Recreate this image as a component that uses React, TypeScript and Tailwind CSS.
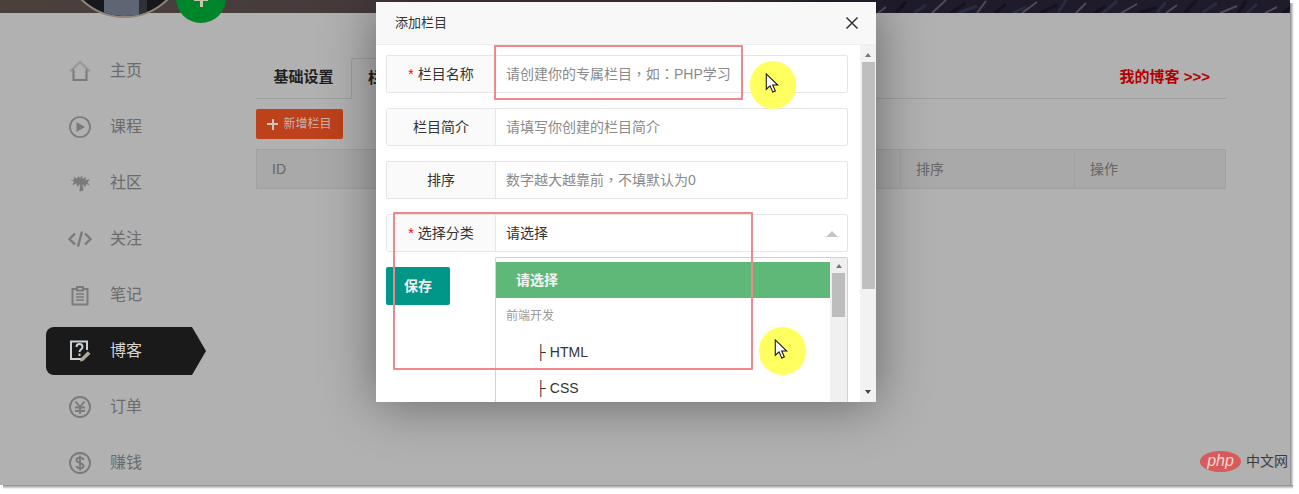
import type { ReactNode } from "react"

const font = "font-['Liberation_Sans','Noto_Sans_CJK_SC',sans-serif]"

const navIcon = "h-[24px] w-[24px] text-[#7a7a7a]"

const icons: Record<string, ReactNode> = {
  home: (
    <svg viewBox="0 0 24 24" className={navIcon} fill="none" stroke="currentColor" strokeWidth="2">
      <path d="M2 12.500 12 3l10 9.500" stroke="#989898" />
      <path d="M5.500 10.500V21h13V10.500" />
    </svg>
  ),
  play: (
    <svg viewBox="0 0 24 24" className={navIcon} fill="none" stroke="currentColor" strokeWidth="1.700">
      <circle cx="12" cy="12" r="10" />
      <path d="M8.500 7l8.500 5-8.500 5z" fill="currentColor" stroke="none" />
    </svg>
  ),
  palm: (
    <svg viewBox="0 0 24 24" className={navIcon} fill="currentColor">
      <path d="M10.500 5 12 7.500 13.500 4.500 15 8l3-2.500-.5 3.500 4.500-.5-2.500 3 2.500 3-4-1.500-.5 3.500-3-3.500 1 6.500-4 1 .5-7.500-3 3-.5-4-4 2.500 1.500-4.500L2 9l4.500-.5-1-3L9 7.500z" />
    </svg>
  ),
  code: (
    <svg viewBox="0 0 24 24" className={navIcon} fill="none" stroke="currentColor" strokeWidth="2.400">
      <path d="M7 6.500 1.500 12 7 17.500M17 6.500l5.500 5.500-5.500 5.500M14 4.500 10 19.500" />
    </svg>
  ),
  note: (
    <svg viewBox="0 0 24 24" className={navIcon} fill="none" stroke="currentColor" strokeWidth="1.900">
      <path d="M8.500 6H4.500v15.500h15V6h-4" />
      <path d="M9 4h6v3.500H9z" />
      <path d="M8 11h8M8 14h8M8 17h8" strokeWidth="1.500" />
    </svg>
  ),
  blog: (
    <svg viewBox="0 0 24 24" className="h-[24px] w-[24px] text-[#c9d0d6]" fill="none" stroke="currentColor" strokeWidth="2">
      <path d="M13 20H3V2.500h16V11" />
      <path d="M8.500 8c0-4 6-4 6 0 0 2.500-3 2.500-3 5M11.500 14.500v2.500" strokeWidth="2" />
      <path d="M15 22l-3 .5.8-3.300 7-7 2.700 2.500z" fill="#b0a89c" stroke="none" />
    </svg>
  ),
  yen: (
    <svg viewBox="0 0 24 24" className={navIcon} fill="none" stroke="currentColor" strokeWidth="1.900">
      <circle cx="12" cy="12" r="10" />
      <path d="M7.500 6.500 12 12l4.500-5.500M7 12.500h10M7 16h10M12 12v7" />
    </svg>
  ),
  dollar: (
    <svg viewBox="0 0 24 24" className={navIcon} fill="none" stroke="currentColor" strokeWidth="1.900">
      <circle cx="12" cy="12" r="10" />
      <path d="M15.500 9c-.5-3-7-3-7 0 0 3.500 7 2.500 7 6 0 3-6.500 3-7 0M12 4.500v15" />
    </svg>
  ),
}

const navItems = [
  { label: "主页", icon: "home" },
  { label: "课程", icon: "play" },
  { label: "社区", icon: "palm" },
  { label: "关注", icon: "code" },
  { label: "笔记", icon: "note" },
  { label: "博客", icon: "blog", active: true },
  { label: "订单", icon: "yen" },
  { label: "赚钱", icon: "dollar" },
]

const formRows = [
  { label: "栏目名称", placeholder: "请创建你的专属栏目，如：PHP学习", required: true },
  { label: "栏目简介", placeholder: "请填写你创建的栏目简介" },
  { label: "排序", placeholder: "数字越大越靠前，不填默认为0" },
]

// rock streaks of the banner photo, right of the modal
const streaks = Array.from({ length: 26 }, (_, i) => {
  const x = 878 + i * 16 + ((i * 11) % 9)
  const len = 8 + ((i * 13) % 11)
  const light = i % 3 === 0
  return {
    d: `M${x} 13l${len} -${6 + ((i * 5) % 8)}`,
    stroke: light ? "#6e6c70" : i % 3 === 1 ? "#0f0d16" : "#2f3950",
    width: light ? 2 : 3,
  }
})

function Cursor() {
  return (
    <svg viewBox="0 0 14 22" className="h-[21px] w-[14px]">
      <path d="M1 1v16l4-3.500 2.800 6.500 2.700-1.200-2.800-6.200H13z" fill="#fff" stroke="#111" strokeWidth="1.100" />
    </svg>
  )
}

function ScrollArrow({ up }: { up?: boolean }) {
  return (
    <div
      className={
        up
          ? "h-0 w-0 border-x-[3.5px] border-b-[4px] border-x-transparent border-b-[#777]"
          : "h-0 w-0 border-x-[3.5px] border-t-[4px] border-x-transparent border-t-[#444]"
      }
    />
  )
}

export default function App() {
  return (
    <div className={`relative h-[494px] w-[1299px] overflow-hidden bg-white ${font}`}>
      <div className="relative h-[485px] w-[1290px] overflow-hidden bg-[#b1b1b1]">
        {/* banner */}
        <div className="relative h-[13px] bg-gradient-to-r from-[#4a413d] via-[#42343a] via-55% to-[#1f1b2b] to-70%">
          <svg className="absolute left-0 top-0 h-[13px] w-[1290px]" viewBox="0 0 1290 13">
            {streaks.map((s) => (
              <path key={s.d} d={s.d} stroke={s.stroke} strokeWidth={s.width} fill="none" opacity="0.6" />
            ))}
          </svg>
        </div>
        {/* avatar + add button hanging over the banner */}
        <div className="absolute left-[62px] top-[-107px] h-[125px] w-[125px] overflow-hidden rounded-full border-2 border-[#8f8579] bg-[#17181b]">
          <div className="absolute bottom-0 left-[40px] h-[30px] w-[35px] bg-[#5d6672]" />
          <div className="absolute bottom-0 left-[75px] h-[30px] w-[8px] bg-[#2e3138]" />
        </div>
        <div className="absolute left-[176px] top-[-27px] flex h-[50px] w-[50px] items-end justify-center rounded-full bg-[#00862a] pb-[16px]">
          <span className="relative block h-[14px] w-[14px]">
            <span className="absolute left-[5.500px] top-0 h-[14px] w-[3px] bg-[#c4c8a8]" />
            <span className="absolute left-0 top-[6px] h-[2px] w-[14px] bg-[#c4c8a8]" />
          </span>
        </div>

        <div className="flex">
          <nav className="ml-[46px] mt-[30px] w-[210px] shrink-0">
            {navItems.map((item) =>
              item.active ? (
                <div key={item.label} className="flex h-[56px] items-center">
                  <div className="flex h-[48px] items-center">
                    <div className="flex h-[48px] w-[146px] items-center rounded-l-[8px] bg-[#1a1a1a] pl-[22px]">
                      {icons[item.icon]}
                      <span className="ml-[18px] text-[16px] text-[#d4d4d4]">{item.label}</span>
                    </div>
                    <div className="h-0 w-0 border-y-[24px] border-l-[14px] border-y-transparent border-l-[#1a1a1a]" />
                  </div>
                </div>
              ) : (
                <div key={item.label} className="flex h-[56px] items-center pl-[22px]">
                  {icons[item.icon]}
                  <span className="ml-[18px] text-[16px] text-[#6b6b6b]">{item.label}</span>
                </div>
              ),
            )}
          </nav>

          <main className="mt-[45px] w-[970px] shrink-0">
            <div className="flex h-[41px] items-end justify-between border-b border-[#9f9f9f]">
              <div className="flex h-full items-stretch">
                <div className="flex w-[95px] items-center justify-center pb-[2px] text-[15px] font-bold text-[#222]">基础设置</div>
                <div className="mb-[-1px] flex w-[120px] items-center rounded-t-[3px] border-x border-t border-[#9f9f9f] bg-[#b1b1b1] pb-[2px] pl-[16px] text-[15px] font-bold text-[#222]">
                  栏目管理
                </div>
              </div>
              <a className="mb-[10px] mr-[16px] text-[15px] font-bold text-[#b30000]">我的博客 &gt;&gt;&gt;</a>
            </div>
            <button className="mt-[10px] flex h-[30px] w-[87px] items-center justify-center gap-[5px] rounded-[2px] bg-[#bd411b] text-[12px] text-[#c9b3ab]">
              <span className="relative block h-[11px] w-[11px]">
                <span className="absolute left-[4.500px] top-0 h-[11px] w-[2px] bg-[#d0c4be]" />
                <span className="absolute left-0 top-[4.500px] h-[2px] w-[11px] bg-[#d0c4be]" />
              </span>
              新增栏目
            </button>
            <div className="mt-[10px] flex h-[40px] border border-[#a0a0a0] bg-[#a9a9a9] text-[14px] text-[#666]">
              <div className="flex w-[643px] items-center pl-[15px]">ID</div>
              <div className="flex w-[174px] items-center border-l border-[#a0a0a0] pl-[15px]">排序</div>
              <div className="flex flex-1 items-center border-l border-[#a0a0a0] pl-[15px]">操作</div>
            </div>
          </main>
        </div>

        {/* php logo */}
        <div className="absolute left-[1200px] top-[451px] flex items-center gap-[5px]">
          <div className="flex h-[21px] w-[41px] items-center justify-center rounded-[50%] bg-[#d95a5a] pb-[2px] text-[16px] italic text-[#f0d6d6]">php</div>
          <span className="text-[14px] text-[#3f3a3a]">中文网</span>
        </div>

        {/* modal */}
        <div className="absolute left-[376px] top-[2px] flex h-[400px] w-[500px] flex-col bg-white shadow-[0_2px_50px_rgba(0,0,0,0.42)]">
          <div className="flex h-[43px] shrink-0 items-center justify-between border-b border-[#eee] bg-[#f8f8f8] pl-[19px] pr-[17px]">
            <span className="text-[13px] text-[#333]">添加栏目</span>
            <svg viewBox="0 0 14 14" className="h-[14px] w-[14px]" fill="none" stroke="#333" strokeWidth="1.500">
              <path d="M1.500 1.500l11 11M12.500 1.500l-11 11" />
            </svg>
          </div>
          <div className="relative flex min-h-0 flex-1">
            <div className="flex w-[484px] flex-col gap-[15px] overflow-hidden pl-[10px] pt-[10px]">
              {formRows.map((row) => (
                <div key={row.label} className="flex h-[38px] w-[462px] shrink-0 rounded-[2px] border border-[#e6e6e6]">
                  <div className="flex w-[109px] shrink-0 items-center justify-center gap-[4px] border-r border-[#e6e6e6] bg-[#fafafa] text-[14px] text-[#333]">
                    {row.required && <span className="text-[#f00]">*</span>}
                    <span>{row.label}</span>
                  </div>
                  <div className="flex flex-1 items-center pl-[10px] font-['Liberation_Sans','Noto_Sans_CJK_TC',sans-serif] text-[14px] text-[#8a8a8a]">
                    {row.placeholder}
                  </div>
                </div>
              ))}
              <div className="flex h-[38px] w-[462px] shrink-0 rounded-[2px] border border-[#e6e6e6]">
                <div className="flex w-[109px] shrink-0 items-center justify-center gap-[4px] border-r border-[#e6e6e6] bg-[#fafafa] text-[14px] text-[#333]">
                  <span className="text-[#f00]">*</span>
                  <span>选择分类</span>
                </div>
                <div className="flex flex-1 items-center justify-between pl-[10px] pr-[9px] pt-[1px] text-[14px] text-[#333]">
                  请选择
                  <div className="h-0 w-0 border-x-[6px] border-b-[6px] border-x-transparent border-b-[#c4c4c4]" />
                </div>
              </div>
              <button className="h-[38px] w-[64px] shrink-0 rounded-[2px] bg-[#009688] text-[14px] font-bold text-[#f0f0f0]">保存</button>
            </div>
            {/* dropdown list */}
            <div className="absolute left-[119px] top-[212px] flex h-[145px] w-[353px] rounded-t-[2px] border-x border-t border-[#d2d2d2] bg-white">
              <div className="min-w-0 flex-1 pt-[4px]">
                <div className="flex h-[36px] items-center bg-[#5fb878] pl-[20px] text-[14px] font-bold text-[#f4f4f4]">请选择</div>
                <div className="flex h-[36px] items-center pl-[10px] text-[12px] text-[#999]">前端开发</div>
                <div className="flex h-[36px] items-center pl-[40px] text-[14px] text-[#333]">├ HTML</div>
                <div className="flex h-[36px] items-center pl-[40px] text-[14px] text-[#333]">├ CSS</div>
              </div>
              <div className="flex w-[17px] shrink-0 flex-col items-center bg-[#f0f0f0] pt-[6px]">
                <ScrollArrow up />
                <div className="mt-[5px] h-[44px] w-[13px] bg-[#bdbdbd]" />
              </div>
            </div>
            {/* modal scrollbar */}
            <div className="flex w-[16px] shrink-0 flex-col items-center bg-[#f2f2f2] pb-[8px] pt-[8px]">
              <ScrollArrow up />
              <div className="mt-[5px] h-[227px] w-[13px] bg-[#bfbfbf]" />
              <div className="mt-auto">
                <ScrollArrow />
              </div>
            </div>
          </div>
        </div>

        {/* annotations on top of the screenshot */}
        <div className="absolute left-[494px] top-[45px] h-[55px] w-[249px] rounded-[1px] border-2 border-[#f4858c]" />
        <div className="absolute left-[393px] top-[212px] h-[158px] w-[360px] rounded-[1px] border-2 border-[#f4858c]" />
        <div className="absolute left-[750px] top-[61px] flex h-[48px] w-[46px] items-center justify-center rounded-full bg-[#ffff5f] pb-[3px] pr-[3px]">
          <Cursor />
        </div>
        <div className="absolute left-[759px] top-[327px] flex h-[48px] w-[47px] items-center justify-center rounded-full bg-[#ffff5f] pb-[3px] pr-[3px]">
          <Cursor />
        </div>
      </div>
      {/* window shadow on the white surround */}
      <div className="absolute left-[1290px] top-[3px] h-[485px] w-[4px] bg-gradient-to-r from-[#8a8a8a] to-white" />
      <div className="absolute left-[3px] top-[485px] h-[4px] w-[1290px] bg-gradient-to-b from-[#8a8a8a] to-white" />
    </div>
  )
}
